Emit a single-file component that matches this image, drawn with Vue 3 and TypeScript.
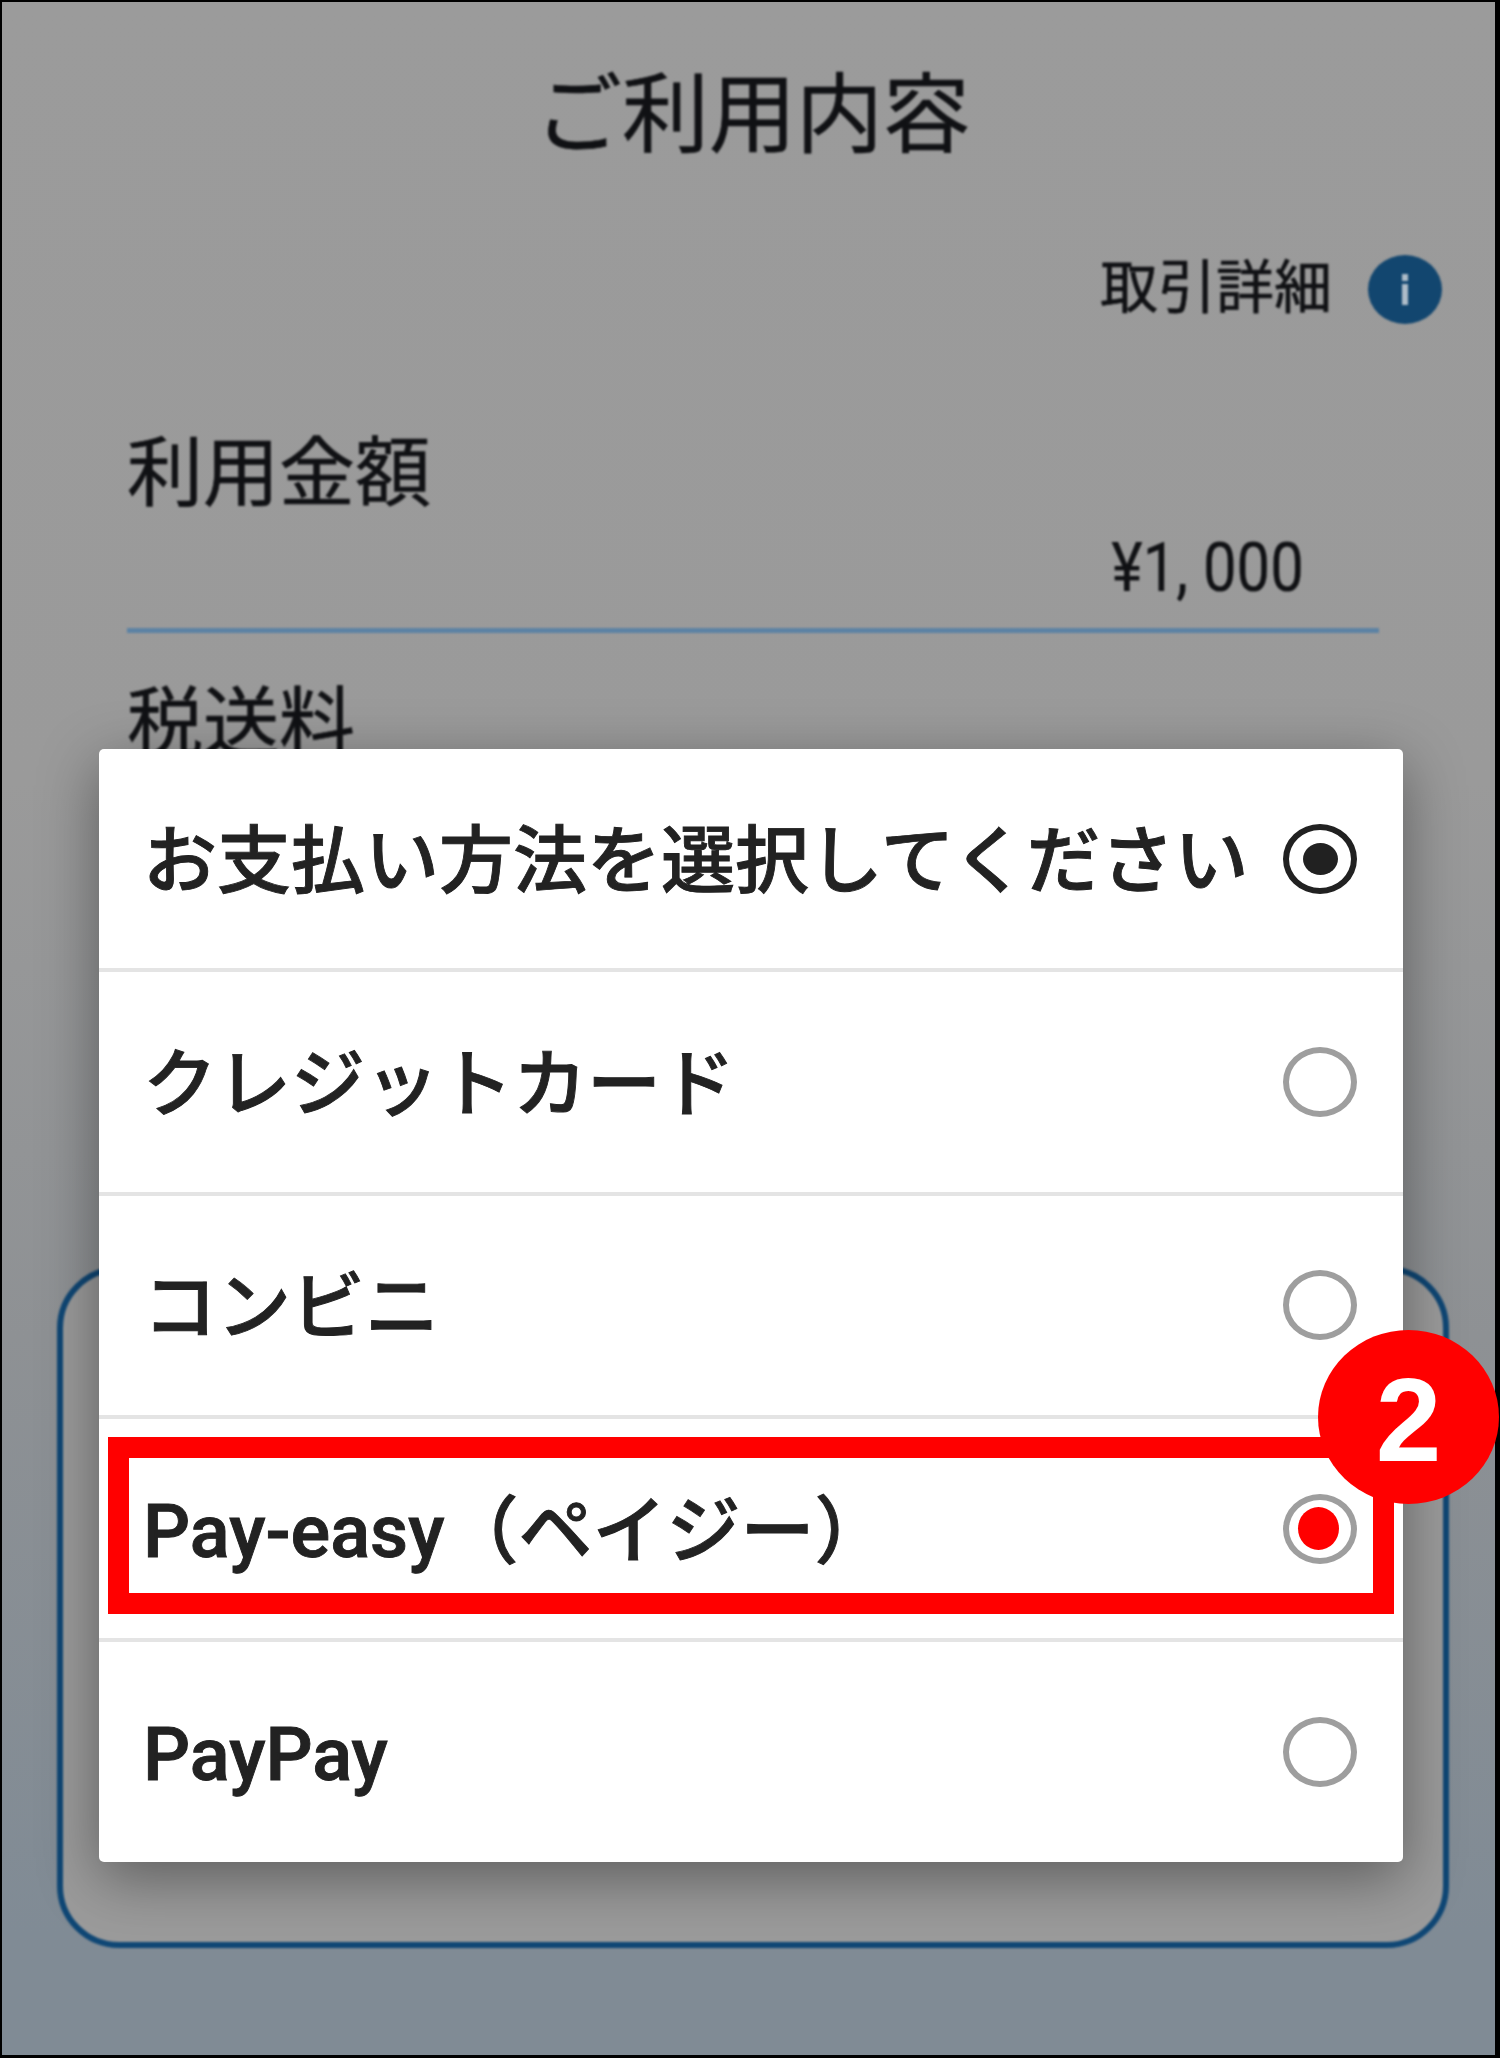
<script setup lang="ts">
interface PayOption {
  label: string
  state: 'idle' | 'dark' | 'red'
}
const options: PayOption[] = [
  { label: 'お支払い方法を選択してください', state: 'dark' },
  { label: 'クレジットカード', state: 'idle' },
  { label: 'コンビニ', state: 'idle' },
  { label: 'Pay-easy（ペイジー）', state: 'red' },
  { label: 'PayPay', state: 'idle' }
]
</script>

<template>
  <div class="frame">
    <div class="screen">
      <div class="page">
        <h1 class="title">ご利用内容</h1>
        <div class="detail">
          <span class="detail-text">取引詳細</span>
          <span class="info"><i class="info-dot"></i><i class="info-stem"></i></span>
        </div>
        <section class="section">
          <div class="label">利用金額</div>
          <div class="amount"><span class="amount-text">¥1, 000</span></div>
          <div class="rule"></div>
          <div class="label label-next">税送料</div>
        </section>
        <div class="panel"></div>
      </div>

      <div class="dialog">
        <div v-for="o in options" :key="o.label" class="row">
          <span class="row-label">{{ o.label }}</span>
          <span class="radio" :class="o.state"><i v-if="o.state !== 'idle'" class="dot"></i></span>
        </div>
      </div>

      <div class="highlight"></div>
      <div class="badge"><span>2</span></div>
    </div>
  </div>
</template>

<style>
html, body { margin: 0; background: #000; }
</style>

<style scoped>
.frame {
  width: 1500px;
  height: 2058px;
  box-sizing: border-box;
  padding: 2px 5px 3px 2px;
  background: #000;
  font-family: Roboto, "Noto Sans CJK JP", sans-serif;
  color: #101114;
}
.screen {
  position: relative;
  width: 1493px;
  height: 2053px;
  background: linear-gradient(180deg, #9b9b9b 0%, #9a9a9a 38%, #8e9194 65%, #808b95 94%, #808b95 100%);
}
.page {
  display: flex;
  flex-direction: column;
  filter: blur(0.8px);
  font-family: "Noto Sans CJK JP", sans-serif;
  -webkit-text-stroke: 0.6px #101114;
}
.title {
  margin: 63px 0 0;
  padding-left: 8px;
  text-align: center;
  font-size: 87px;
  line-height: 87px;
  font-weight: 400;
}
.detail {
  display: flex;
  justify-content: flex-end;
  align-items: center;
  gap: 36px;
  margin-top: 97px;
  padding-right: 53px;
}
.detail-text {
  font-size: 58px;
  line-height: 69px;
  margin-bottom: 11px;
}
.info {
  width: 74px;
  height: 69px;
  border-radius: 50%;
  background: #12466f;
  display: flex;
  flex-direction: column;
  align-items: center;
  justify-content: center;
  gap: 3px;
}
.info-dot { width: 6px; height: 7px; background: #aebcc8; }
.info-stem { width: 6px; height: 21px; background: #aebcc8; }
.section {
  margin-top: 100px;
  padding: 0 116px 0 125px;
}
.label {
  font-size: 76px;
  line-height: 76px;
}
.amount {
  display: flex;
  justify-content: flex-end;
  margin-top: 33px;
  padding-right: 75px;
}
.amount-text {
  font-family: Roboto, sans-serif;
  font-size: 68px;
  line-height: 60px;
  font-weight: 400;
  -webkit-text-stroke: 0.2px #101114;
  transform: scaleX(0.88);
  transform-origin: right center;
}
.rule {
  height: 5px;
  margin-top: 30px;
  background: #5c82a4;
}
.label-next { margin-top: 46px; }
.panel {
  box-sizing: border-box;
  margin: 511px 46px 0 55px;
  height: 682px;
  border: 6px solid #0f4775;
  border-radius: 62px;
  background: #9b9b9b;
}
.dialog {
  position: absolute;
  left: 97px;
  top: 747px;
  width: 1304px;
  height: 1113px;
  background: #fff;
  border-radius: 5px;
  box-shadow: 0 16px 60px rgba(0, 0, 0, 0.4);
  display: flex;
  flex-direction: column;
  filter: blur(0.7px);
}
.row {
  height: 223.3px;
  box-sizing: border-box;
  display: flex;
  align-items: center;
  justify-content: space-between;
  padding: 0 46px 0 44px;
  border-bottom: 4px solid #e4e4e4;
}
.row:last-child { border-bottom: none; height: auto; flex: 1; }
.row-label {
  font-size: 74px;
  line-height: 80px;
  font-weight: 500;
  color: #222;
  -webkit-text-stroke: 0.9px #222;
  white-space: nowrap;
  margin-top: 6px;
}
.radio {
  box-sizing: border-box;
  width: 74px;
  height: 70px;
  border: 6px solid #9e9e9e;
  border-radius: 50%;
  background: #fff;
  display: flex;
  align-items: center;
  justify-content: center;
  flex: none;
}
.radio.dark { border-color: #212121; }
.dot { display: block; width: 35px; height: 32px; border-radius: 50%; background: #212121; }
.radio.red .dot { width: 41px; height: 43px; background: #f00; margin-right: 4px; }
.highlight {
  position: absolute;
  left: 106px;
  top: 1435px;
  width: 1286px;
  height: 177px;
  box-sizing: border-box;
  border: 21px solid #f00;
}
.badge {
  position: absolute;
  left: 1316px;
  top: 1328px;
  width: 181px;
  height: 174px;
  border-radius: 50%;
  background: #f00;
  color: #fff;
  display: flex;
  align-items: center;
  justify-content: center;
  font-family: "Liberation Sans", sans-serif;
  font-weight: 700;
  font-size: 118px;
  line-height: 1;
}
.badge span { position: relative; top: 3px; }
</style>
